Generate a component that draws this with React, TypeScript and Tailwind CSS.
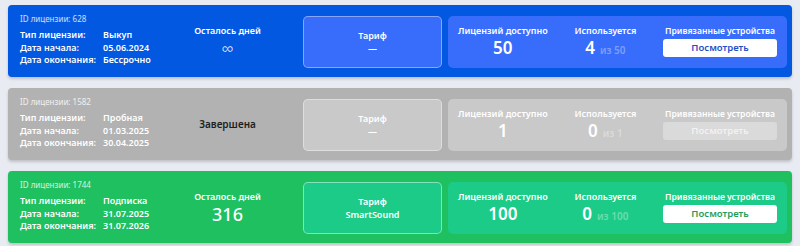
import React from "react";

type Theme = {
  card: string;
  inner: string;
  tariffBorder: string;
  btn: string;
  btnText: string;
  sub: string;
  idText: string;
};

const blue: Theme = {
  card: "bg-[#0258e0]",
  inner: "bg-[#386dfb]",
  tariffBorder: "border-white/40",
  btn: "bg-white",
  btnText: "text-[#1d4fc6]",
  sub: "text-white/35",
  idText: "text-white/80",
};
const gray: Theme = {
  card: "bg-[#b2b2b2]",
  inner: "bg-[#c9c9c9]",
  tariffBorder: "border-white/40",
  btn: "bg-[#dadada]",
  btnText: "text-[#f2f2f2]",
  sub: "text-white/35",
  idText: "text-white/80",
};
const green: Theme = {
  card: "bg-[#1ec060]",
  inner: "bg-[#1dcb88]",
  tariffBorder: "border-white/45",
  btn: "bg-white",
  btnText: "text-[#1c9d5c]",
  sub: "text-white/35",
  idText: "text-white/80",
};

type Lic = {
  id: string;
  type: string;
  start: string;
  end: string;
  theme: Theme;
  days: React.ReactNode;
  finished?: boolean;
  tariff: string;
  avail: string;
  used: string;
};

const data: Lic[] = [
  {
    id: "628",
    type: "Выкуп",
    start: "05.06.2024",
    end: "Бессрочно",
    theme: blue,
    days: <span className="text-[17px] font-light">∞</span>,
    tariff: "—",
    avail: "50",
    used: "4",
  },
  {
    id: "1582",
    type: "Пробная",
    start: "01.03.2025",
    end: "30.04.2025",
    theme: gray,
    days: null,
    finished: true,
    tariff: "—",
    avail: "1",
    used: "0",
  },
  {
    id: "1744",
    type: "Подписка",
    start: "31.07.2025",
    end: "31.07.2026",
    theme: green,
    days: "316",
    tariff: "SmartSound",
    avail: "100",
    used: "0",
  },
];

function Card({ l }: { l: Lic }) {
  const t = l.theme;
  return (
    <div
      className={`flex h-[72px] items-center rounded-[4px] pl-3 pr-[5px] text-white shadow-[0_2px_3px_rgba(0,0,0,0.18)] ${t.card}`}
    >
      <div className="flex w-[140px] flex-col self-stretch pt-[8px]">
        <div className={`whitespace-nowrap text-[8px] leading-[12px] ${t.idText}`}>ID лицензии: {l.id}</div>
        <div className="mt-[4px] grid grid-cols-[83px_auto] whitespace-nowrap text-[9px] font-semibold leading-[12.5px]">
          <span>Тип лицензии:</span>
          <span>{l.type}</span>
          <span>Дата начала:</span>
          <span>{l.start}</span>
          <span>Дата окончания:</span>
          <span>{l.end}</span>
        </div>
      </div>
      {l.finished ? (
        <div className="flex w-[135px] items-center justify-center self-stretch">
          <span className="text-[10px] font-semibold text-[#1e1e1e]">Завершена</span>
        </div>
      ) : (
        <div className="flex w-[135px] flex-col items-center self-stretch pt-[19px]">
          <div className="whitespace-nowrap text-[9px] font-semibold leading-[14px]">Осталось дней</div>
          <div className="text-[18px] font-medium leading-[21px]">{l.days}</div>
        </div>
      )}
      <div
        className={`ml-2 mt-[2px] flex h-[52px] w-[139px] flex-col items-center justify-center rounded-[5px] border ${t.tariffBorder} ${t.inner} text-[9px] font-semibold leading-[13px]`}
      >
        <span>Тариф</span>
        <span>{l.tariff}</span>
      </div>
      <div
        className={`ml-[6px] mt-[2px] flex h-[52px] flex-1 items-start justify-between rounded-[5px] px-[10px] pt-[8px] ${t.inner}`}
      >
        <div className="flex flex-col items-center">
          <span className="whitespace-nowrap text-[9px] font-semibold leading-[14px]">Лицензий доступно</span>
          <span className="text-[17px] font-semibold leading-[19px]">{l.avail}</span>
        </div>
        <div className="flex flex-col items-center">
          <span className="whitespace-nowrap text-[9px] font-semibold leading-[14px]">Используется</span>
          <span className="flex items-baseline leading-[19px]">
            <span className="text-[17px] font-semibold">{l.used}</span>
            <span className={`ml-[5px] text-[10px] font-semibold ${t.sub}`}>из {l.avail}</span>
          </span>
        </div>
        <div className="flex w-[114px] flex-col items-center">
          <span className="whitespace-nowrap text-[8.6px] font-semibold leading-[14px]">
            Привязанные устройства
          </span>
          <div
            className={`mt-[1px] flex h-[18px] w-full items-center justify-center rounded-[3px] text-[9.5px] font-semibold ${t.btn} ${t.btnText}`}
          >
            Посмотреть
          </div>
        </div>
      </div>
    </div>
  );
}

export default function App() {
  return (
    <div
      className="flex h-[246px] w-[800px] flex-col gap-[11px] bg-[#e9ebf3] px-2 pt-[5px]"
      style={{ fontFamily: '"Noto Sans", "Open Sans", sans-serif' }}
    >
      {data.map((l) => (
        <Card key={l.id} l={l} />
      ))}
    </div>
  );
}
